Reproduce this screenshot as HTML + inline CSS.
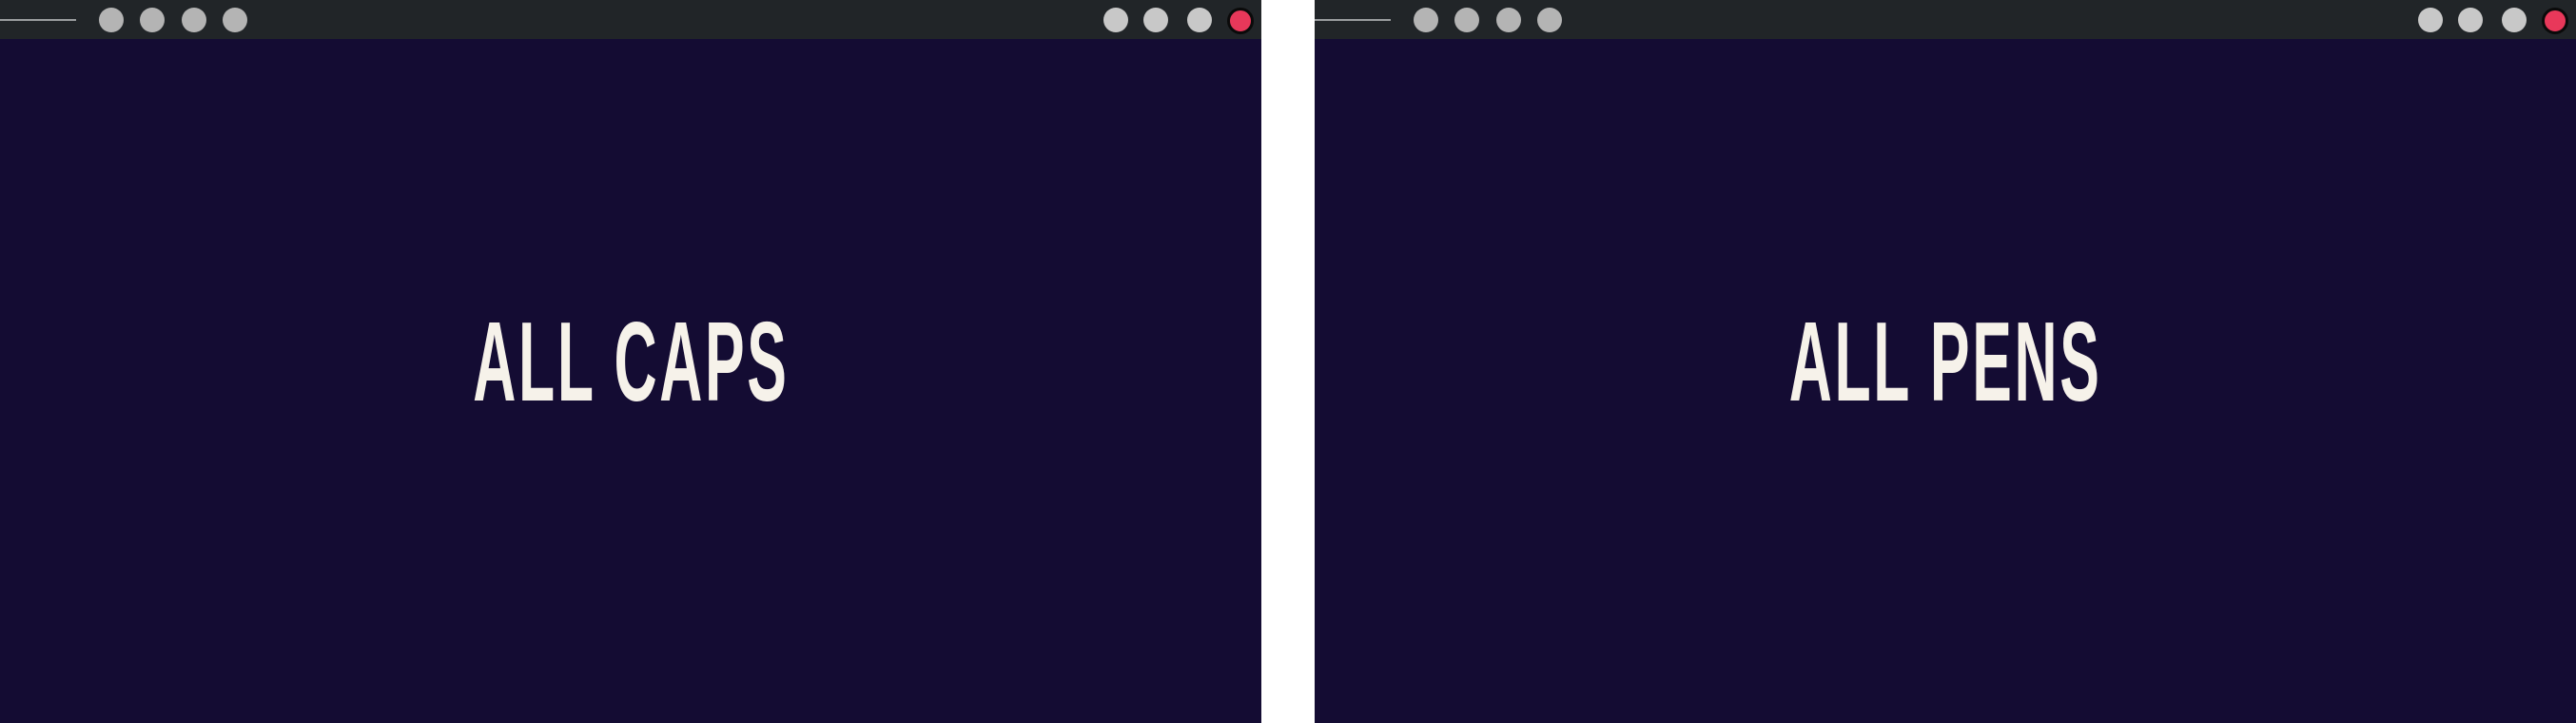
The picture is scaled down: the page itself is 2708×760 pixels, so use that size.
<!DOCTYPE html>
<html><head><style>
html,body{margin:0;padding:0;width:2708px;height:760px;background:#fff;overflow:hidden}
.p{position:absolute;top:0;height:760px;width:1326px;background:#140c33}
.bar{position:absolute;left:0;top:0;right:0;height:41px;background:#212528}
.line{position:absolute;left:0;top:20px;width:80px;height:2px;background:#9a9d9f}
.d{position:absolute;top:8px;width:26px;height:26px;border-radius:50%;background:#b4b4b4}
.r{background:#e8385a;border:3px solid #0a0a0a;width:22px;height:22px;top:8px}
.t{position:absolute;top:321px;left:0;width:1326px;text-align:center;color:#f6f2ea;
font:bold 119px/1 "Liberation Sans",sans-serif;white-space:nowrap}
.t span{display:inline-block;transform:scaleX(0.525);letter-spacing:5px}
</style></head><body>
<div class="p" style="left:0">
<div class="bar"><div class="line"></div>
<div class="d" style="left:104px"></div><div class="d" style="left:147px"></div><div class="d" style="left:191px"></div><div class="d" style="left:234px"></div>
<div class="d" style="left:1160px;background:#c8c8c8"></div><div class="d" style="left:1202px;background:#c8c8c8"></div><div class="d" style="left:1248px;background:#c8c8c8"></div><div class="d r" style="left:1290px"></div>
</div>
<div class="t"><span>ALL CAPS</span></div>
</div>
<div class="p" style="left:1382px">
<div class="bar"><div class="line"></div>
<div class="d" style="left:104px"></div><div class="d" style="left:147px"></div><div class="d" style="left:191px"></div><div class="d" style="left:234px"></div>
<div class="d" style="left:1160px;background:#c8c8c8"></div><div class="d" style="left:1202px;background:#c8c8c8"></div><div class="d" style="left:1248px;background:#c8c8c8"></div><div class="d r" style="left:1290px"></div>
</div>
<div class="t"><span>ALL PENS</span></div>
</div>
</body></html>
